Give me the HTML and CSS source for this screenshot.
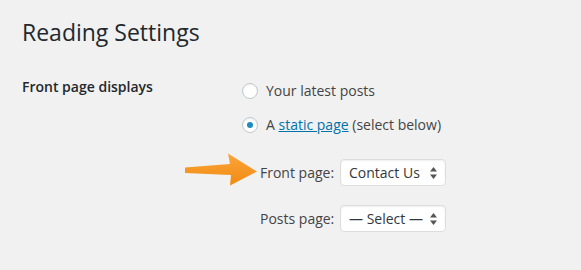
FILE: index.html
```html
<!doctype html>
<html>

<head>
	<title>Reading Settings</title>
	<link rel="stylesheet" href="styles.css">
</head>

<body>
	<div class="wrap">
		<h1>Reading Settings</h1>
		<div class="field">
			<div class="fieldLabel">Front page displays</div>
			<div class="control">
				<label class="radio"><span class="circle"></span>Your latest posts</label>
				<label class="radio"><span class="circle checked"></span>A&nbsp;<a href="#">static page</a>&nbsp;(select below)</label>
				<div class="pages">
					<div class="pageRow">
						<svg class="pointer" width="76" height="36" viewBox="0 0 76 36">
							<defs>
								<linearGradient id="orange" x1="0" y1="0" x2="0" y2="1">
									<stop offset="0" stop-color="#fba53a" />
									<stop offset="1" stop-color="#f18a12" />
								</linearGradient>
							</defs>
							<path d="M1 15.5 L46 12 L44 1.5 L73 19.5 L46 33.5 L47 23 L1 21 Z" fill="url(#orange)" />
						</svg>
						<span class="pageLabel">Front page:</span>
						<div class="select">
							<span>Contact Us</span>
							<svg width="7" height="12" viewBox="0 0 7 12">
								<path d="M3.5 0 L7 4.5 L0 4.5 Z M0 7.5 L7 7.5 L3.5 12 Z" fill="#555" />
							</svg>
						</div>
					</div>
					<div class="pageRow">
						<span class="pageLabel">Posts page:</span>
						<div class="select">
							<span>&mdash; Select &mdash;</span>
							<svg width="7" height="12" viewBox="0 0 7 12">
								<path d="M3.5 0 L7 4.5 L0 4.5 Z M0 7.5 L7 7.5 L3.5 12 Z" fill="#555" />
							</svg>
						</div>
					</div>
				</div>
			</div>
		</div>
	</div>
</body>

</html>
```

FILE: styles.css
```css
body {
	margin: 0;
	background-color: #f1f1f1;
	font-family: 'Open Sans', 'Noto Sans', sans-serif;
	font-size: 14px;
	color: #444;
}

.wrap {
	padding: 18px 22px 0 22px;
}

h1 {
	margin: 0;
	font-size: 23px;
	font-weight: 400;
	line-height: 29px;
	color: #23282d;
}

.field {
	display: flex;
	margin-top: 30px;
	line-height: 20px;
}

.fieldLabel {
	width: 220px;
	flex-shrink: 0;
	font-weight: 600;
	color: #23282d;
}

.control {
	display: flex;
	flex-direction: column;
	padding-top: 4px;
}

.radio {
	display: flex;
	align-items: center;
	margin-bottom: 14px;
}

.radio a {
	color: #0073aa;
	text-decoration: underline;
}

.circle {
	position: relative;
	width: 14px;
	height: 14px;
	margin-right: 8px;
	border: 1px solid #c4c8cc;
	border-radius: 50%;
	background-color: #fff;
	box-shadow: inset 0 1px 2px rgba(0, 0, 0, 0.07);
}

.circle.checked::after {
	content: '';
	position: absolute;
	left: 4px;
	top: 4px;
	width: 6px;
	height: 6px;
	border-radius: 50%;
	background-color: #1e8cbe;
}

.pages {
	display: flex;
	flex-direction: column;
	gap: 19px;
	margin-top: 10px;
	margin-left: 18px;
}

.pageRow {
	position: relative;
	display: flex;
	align-items: center;
}

.pointer {
	position: absolute;
	left: -76px;
	top: -7px;
}

.pageLabel {
	flex-shrink: 0;
	width: 74px;
	margin-right: 6px;
	white-space: nowrap;
	text-align: right;
}

.select {
	display: flex;
	flex-shrink: 0;
	align-items: center;
	justify-content: space-between;
	box-sizing: border-box;
	width: 106px;
	height: 27px;
	padding: 0 8px;
	border: 1px solid #ddd;
	border-radius: 4px;
	background-color: #fff;
	box-shadow: inset 0 1px 2px rgba(0, 0, 0, 0.07);
	color: #32373c;
	white-space: nowrap;
}
```
